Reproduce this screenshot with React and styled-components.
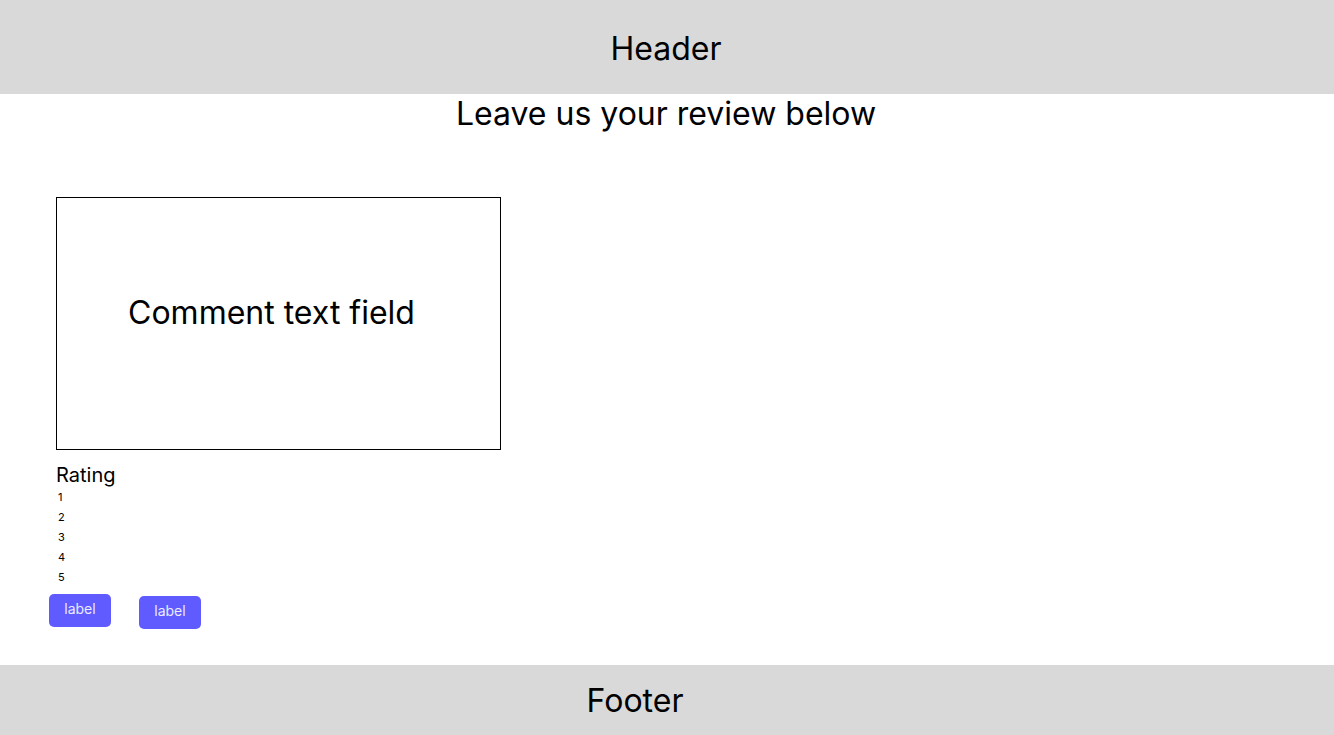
import React from "react";
import styled, { createGlobalStyle } from "styled-components";

const Global = createGlobalStyle`
  html, body { margin: 0; padding: 0; background: #ffffff; }
  body { font-family: Inter, "Noto Sans", sans-serif; color: #000; }
`;

const Page = styled.div`
  display: flex;
  flex-direction: column;
  min-height: 735px;
`;

const Bar = styled.div`
  height: ${(p) => p.$h}px;
  background: #d9d9d9;
  display: flex;
  align-items: center;
  justify-content: center;
  padding-right: ${(p) => p.$shift || 0}px;
  padding-top: ${(p) => p.$top || 0}px;
  box-sizing: border-box;
  font-size: 32px;
  font-weight: 400;
  flex-shrink: 0;
`;

const Title = styled.h1`
  margin: 0;
  font-size: 32px;
  font-weight: 400;
  line-height: 40px;
  text-align: center;
  padding-right: 2px;
`;

const Main = styled.main`
  flex: 1;
  display: flex;
  flex-direction: column;
  align-items: flex-start;
  padding: 63px 0 0 56px;
`;

const CommentBox = styled.div`
  width: 445px;
  height: 253px;
  box-sizing: border-box;
  border: 1px solid #000;
  display: flex;
  align-items: center;
  justify-content: center;
  padding: 0 14px 22px 0;
  font-size: 32px;
  line-height: 40px;
`;

const RatingLabel = styled.div`
  margin-top: 13px;
  font-size: 20px;
  line-height: 24px;
`;

const RatingList = styled.ol`
  list-style: none;
  margin: 0;
  padding: 0 0 0 2px;
  display: flex;
  flex-direction: column;
`;

const RatingItem = styled.li`
  font-size: 11px;
  line-height: 20px;
`;

const ButtonRow = styled.div`
  display: flex;
  align-items: flex-start;
  gap: 28px;
  margin: 7px 0 0 -7px;
`;

const Button = styled.button`
  width: 62px;
  height: 33px;
  margin-top: ${(p) => p.$offset || 0}px;
  border: none;
  border-radius: 5px;
  background: #5f5bff;
  color: #ececff;
  font-family: Inter, "Noto Sans", sans-serif;
  font-size: 14px;
  line-height: 17px;
  padding: 6px 0 0;
  display: flex;
  justify-content: center;
  align-items: flex-start;
  cursor: pointer;
`;

export default function App() {
  return (
    <>
      <Global />
      <Page>
        <Bar $h={94} $top={2} $shift={2}>Header</Bar>
        <Title>Leave us your review below</Title>
        <Main>
          <CommentBox>Comment text field</CommentBox>
          <RatingLabel>Rating</RatingLabel>
          <RatingList>
            {[1, 2, 3, 4, 5].map((n) => (
              <RatingItem key={n}>{n}</RatingItem>
            ))}
          </RatingList>
          <ButtonRow>
            <Button>label</Button>
            <Button $offset={2}>label</Button>
          </ButtonRow>
        </Main>
        <Bar $h={70} $shift={64}>Footer</Bar>
      </Page>
    </>
  );
}
